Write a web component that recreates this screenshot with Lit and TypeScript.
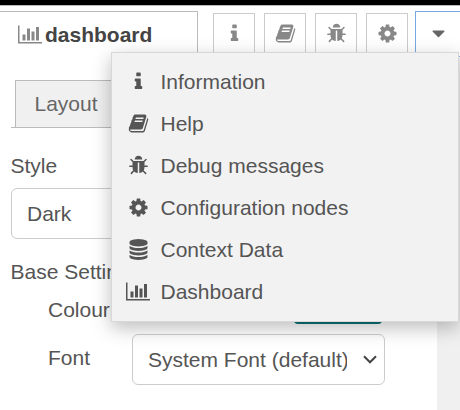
import { LitElement, html, css, svg } from "lit";
import { customElement } from "lit/decorators.js";

const icons: Record<string, string> = {
  info: "M1216 1344v128q0 26-19 45t-45 19h-512q-26 0-45-19t-19-45v-128q0-26 19-45t45-19h64v-384h-64q-26 0-45-19t-19-45v-128q0-26 19-45t45-19h384q26 0 45 19t19 45v576h64q26 0 45 19t19 45zm-128-1152v192q0 26-19 45t-45 19h-256q-26 0-45-19t-19-45v-192q0-26 19-45t45-19h256q26 0 45 19t19 45z",
  book: "M1703 478q40 57 18 129l-275 906q-19 64-76.5 107.5t-122.5 43.5h-923q-77 0-148.5-53.5t-99.5-131.5q-24-67-2-127 0-4 3-27t4-37q1-8-3-21.5t-3-19.5q2-11 8-21t16.5-23.5 16.5-23.5q23-38 45-91.5t30-91.5q3-10 .5-30t-.5-28q3-11 17-28t17-23q21-36 42-92t25-90q1-9-2.5-32t.5-28q4-13 22-30.5t22-22.5q19-26 42.5-84.5t27.5-96.5q1-8-3-25.5t-2-26.5q2-8 9-18t18-23 17-21q8-12 16.5-30.5t15-35 16-36 19.5-32 26.5-23.5 36-11.5 47.5 5.5l-1 3q38-9 51-9h761q74 0 114 56t18 130l-274 906q-36 119-71.5 153.5t-128.5 34.5h-869q-27 0-38 15-11 16-1 43 24 70 144 70h923q29 0 56-15.5t35-41.5l300-987q7-22 5-57 38 15 59 43zm-1064 2q-4 13 2 22.5t20 9.5h608q13 0 25.5-9.5t16.5-22.5l21-64q4-13-2-22.5t-20-9.5h-608q-13 0-25.5 9.5t-16.5 22.5zm-83 256q-4 13 2 22.5t20 9.5h608q13 0 25.5-9.5t16.5-22.5l21-64q4-13-2-22.5t-20-9.5h-608q-13 0-25.5 9.5t-16.5 22.5z",
  bug: "M1696 960q0 26-19 45t-45 19h-224q0 171-67 290l208 209q19 19 19 45t-19 45q-18 19-45 19t-45-19l-198-197q-5 5-15 13t-42 28.5-65 36.5-82 29-97 13v-896h-128v896q-51 0-101.5-13.5t-87-33-66-39-43.5-32.5l-15-14-183 207q-20 21-48 21-24 0-43-16-19-18-20.5-44.5t15.5-46.5l202-227q-58-114-58-274h-224q-26 0-45-19t-19-45 19-45 45-19h224v-294l-173-173q-19-19-19-45t19-45 45-19 45 19l173 173h844l173-173q19-19 45-19t45 19 19 45-19 45l-173 173v294h224q26 0 45 19t19 45zm-480-576h-640q0-133 93.5-226.5t226.5-93.5 226.5 93.5 93.5 226.5z",
  cog: "M1152 896q0-106-75-181t-181-75-181 75-75 181 75 181 181 75 181-75 75-181zm512-109v222q0 12-8 23t-20 13l-185 28q-19 54-39 91 35 50 107 138 10 12 10 25t-9 23q-27 37-99 108t-94 71q-12 0-26-9l-138-108q-44 23-91 38-16 136-29 186-7 28-36 28h-222q-14 0-24.5-8.5t-11.5-21.5l-28-184q-49-16-90-37l-141 107q-10 9-25 9-14 0-25-11-126-114-165-168-7-10-7-23 0-12 8-23 15-21 51-66.5t54-70.5q-27-50-41-99l-183-27q-13-2-21-12.5t-8-23.5v-222q0-12 8-23t19-13l186-28q14-46 39-92-40-57-107-138-10-12-10-24 0-10 9-23 26-36 98.5-107.5t94.5-71.5q13 0 26 10l138 107q44-23 91-38 16-136 29-186 7-28 36-28h222q14 0 24.5 8.5t11.5 21.5l28 184q49 16 90 37l142-107q9-9 24-9 13 0 25 10 129 119 165 170 7 8 7 22 0 12-8 23-15 21-51 66.5t-54 70.5q26 50 41 98l183 28q13 2 21 12.5t8 23.5z",
  database: "M896 768q237 0 443-43t325-127v170q0 69-103 128t-280 93.5-385 34.5-385-34.5-280-93.5-103-128v-170q119 84 325 127t443 43zm0 768q237 0 443-43t325-127v170q0 69-103 128t-280 93.5-385 34.5-385-34.5-280-93.5-103-128v-170q119 84 325 127t443 43zm0-384q237 0 443-43t325-127v170q0 69-103 128t-280 93.5-385 34.5-385-34.5-280-93.5-103-128v-170q119 84 325 127t443 43zm0-1152q208 0 385 34.5t280 93.5 103 128v128q0 69-103 128t-280 93.5-385 34.5-385-34.5-280-93.5-103-128v-128q0-69 103-128t280-93.5 385-34.5z",
  chart: "M640 896v512h-256v-512h256zm384-512v1024h-256v-1024h256zm1024 1152v128h-2048v-1536h128v1408h1920zm-640-896v768h-256v-768h256zm384-384v1152h-256v-1152h256z",
  caret: "M1408 704q0 26-19 45l-448 448q-19 19-45 19t-45-19l-448-448q-19-19-19-45t19-45 45-19h896q26 0 45 19t19 45z",
};

const icon = (name: string) => {
  const w = name === "chart" ? 2048 : 1792;
  return html`<svg width=${(w / 1792) * 21} height="21" viewBox="0 0 ${w} 1792" fill="currentColor">
    ${svg`<path d=${icons[name]}></path>`}
  </svg>`;
};

const menu = [
  ["info", "Information"],
  ["book", "Help"],
  ["bug", "Debug messages"],
  ["cog", "Configuration nodes"],
  ["database", "Context Data"],
  ["chart", "Dashboard"],
];

@customElement("app-root")
export class AppRoot extends LitElement {
  static styles = css`
    :host {
      display: block;
      position: relative;
      width: 460px;
      height: 410px;
      overflow: hidden;
      background: #fff;
      color: #555;
      font: 21px/30px "Liberation Sans", Arial, sans-serif;
    }
    * { box-sizing: border-box; }
    svg { display: block; flex: none; }
    .header { height: 6px; background: #000; border-bottom: 1px solid #bbb; }
    .tabs { display: flex; height: 52px; padding-top: 5px; }
    .tab {
      display: flex;
      flex: none;
      width: 198px;
      height: 47px;
      padding: 12px 0 0 18px;
      border: 1px solid #bbb;
      border-width: 1px 1px 0 0;
      gap: 3px;
      font-weight: bold;
      color: #444;
    }
    .tab svg { color: #888; }
    .tab .name { margin-top: -4px; }
    .tools { display: flex; flex: none; gap: 9px; margin: 2px 0 0 15px; }
    .tool {
      display: flex;
      justify-content: center;
      width: 42px;
      height: 44px;
      padding-top: 9px;
      border: 1px solid #ccc;
      color: #888;
    }
    .more {
      flex: 1;
      height: 46px;
      margin-left: 7px;
      padding: 11px 0 0 12px;
      border: 1px solid #79a7e3;
      border-right: 0;
      color: #666;
    }
    .body { display: flex; height: 352px; }
    .panel { width: 437px; padding: 22px 0 0 11px; }
    .gutter { flex: 1; background: #f0f0f0; }
    .subtabs { display: flex; height: 48px; padding-left: 4px; border-bottom: 1px solid #bbb; }
    .subtab {
      width: 140px;
      height: 47px;
      padding: 8px 0 0 18.5px;
      border: 1px solid #bbb;
      border-bottom: 0;
      background: #f0f0f0;
      color: #666;
    }
    .label { margin: 23px 0 0 -0.5px; }
    .select {
      display: flex;
      align-items: center;
      justify-content: space-between;
      height: 51px;
      padding: 0 7px 0 15px;
      border: 1px solid #ccc;
      border-radius: 6px;
      background: #fff;
    }
    .style { width: 374px; margin-top: 7px; }
    .base { margin: 18px 0 0 -0.5px; }
    .row { display: flex; padding-left: 37px; }
    .row .key { width: 84px; }
    .colour { height: 38px; margin-top: 8px; justify-content: space-between; width: 371px; }
    .swatch { width: 88px; height: 29px; border-radius: 4px; background: #0b7176; }
    .font { margin-top: 1px; }
    .font .key { padding-top: 9px; }
    .font .select { width: 253px; }
    .value { width: 199px; overflow: hidden; white-space: nowrap; }
    .menu {
      position: absolute;
      left: 111px;
      top: 52px;
      width: 348px;
      height: 270px;
      padding-top: 8px;
      border: 1px solid #d8d8d8;
      background: #f2f2f2;
      box-shadow: 0 6px 18px rgba(0, 0, 0, 0.26);
    }
    .item { display: flex; align-items: center; height: 42px; }
    .glyph { display: flex; justify-content: center; width: 24px; margin: 0 10.5px 1px 14px; }
  `;

  render() {
    return html`
      <div class="header"></div>
      <div class="tabs">
        <div class="tab">${icon("chart")}<span class="name">dashboard</span></div>
        <div class="tools">
          ${["info", "book", "bug", "cog"].map((n) => html`<div class="tool">${icon(n)}</div>`)}
        </div>
        <div class="more">${icon("caret")}</div>
      </div>
      <div class="body">
        <div class="panel">
          <div class="subtabs"><div class="subtab">Layout</div></div>
          <div class="label">Style</div>
          <div class="select style">Dark</div>
          <div class="base">Base Settings</div>
          <div class="row colour"><span>Colour</span><span class="swatch"></span></div>
          <div class="row font">
            <span class="key">Font</span>
            <div class="select">
              <span class="value">System Font (default)</span>
              <svg width="14" height="9" viewBox="0 0 14 9" fill="none" stroke="#444" stroke-width="2">
                <path d="M1 1.3l6 6 6-6"></path>
              </svg>
            </div>
          </div>
        </div>
        <div class="gutter"></div>
      </div>
      <div class="menu">
        ${menu.map(([n, label]) => html`<div class="item"><span class="glyph">${icon(n)}</span>${label}</div>`)}
      </div>
    `;
  }
}
